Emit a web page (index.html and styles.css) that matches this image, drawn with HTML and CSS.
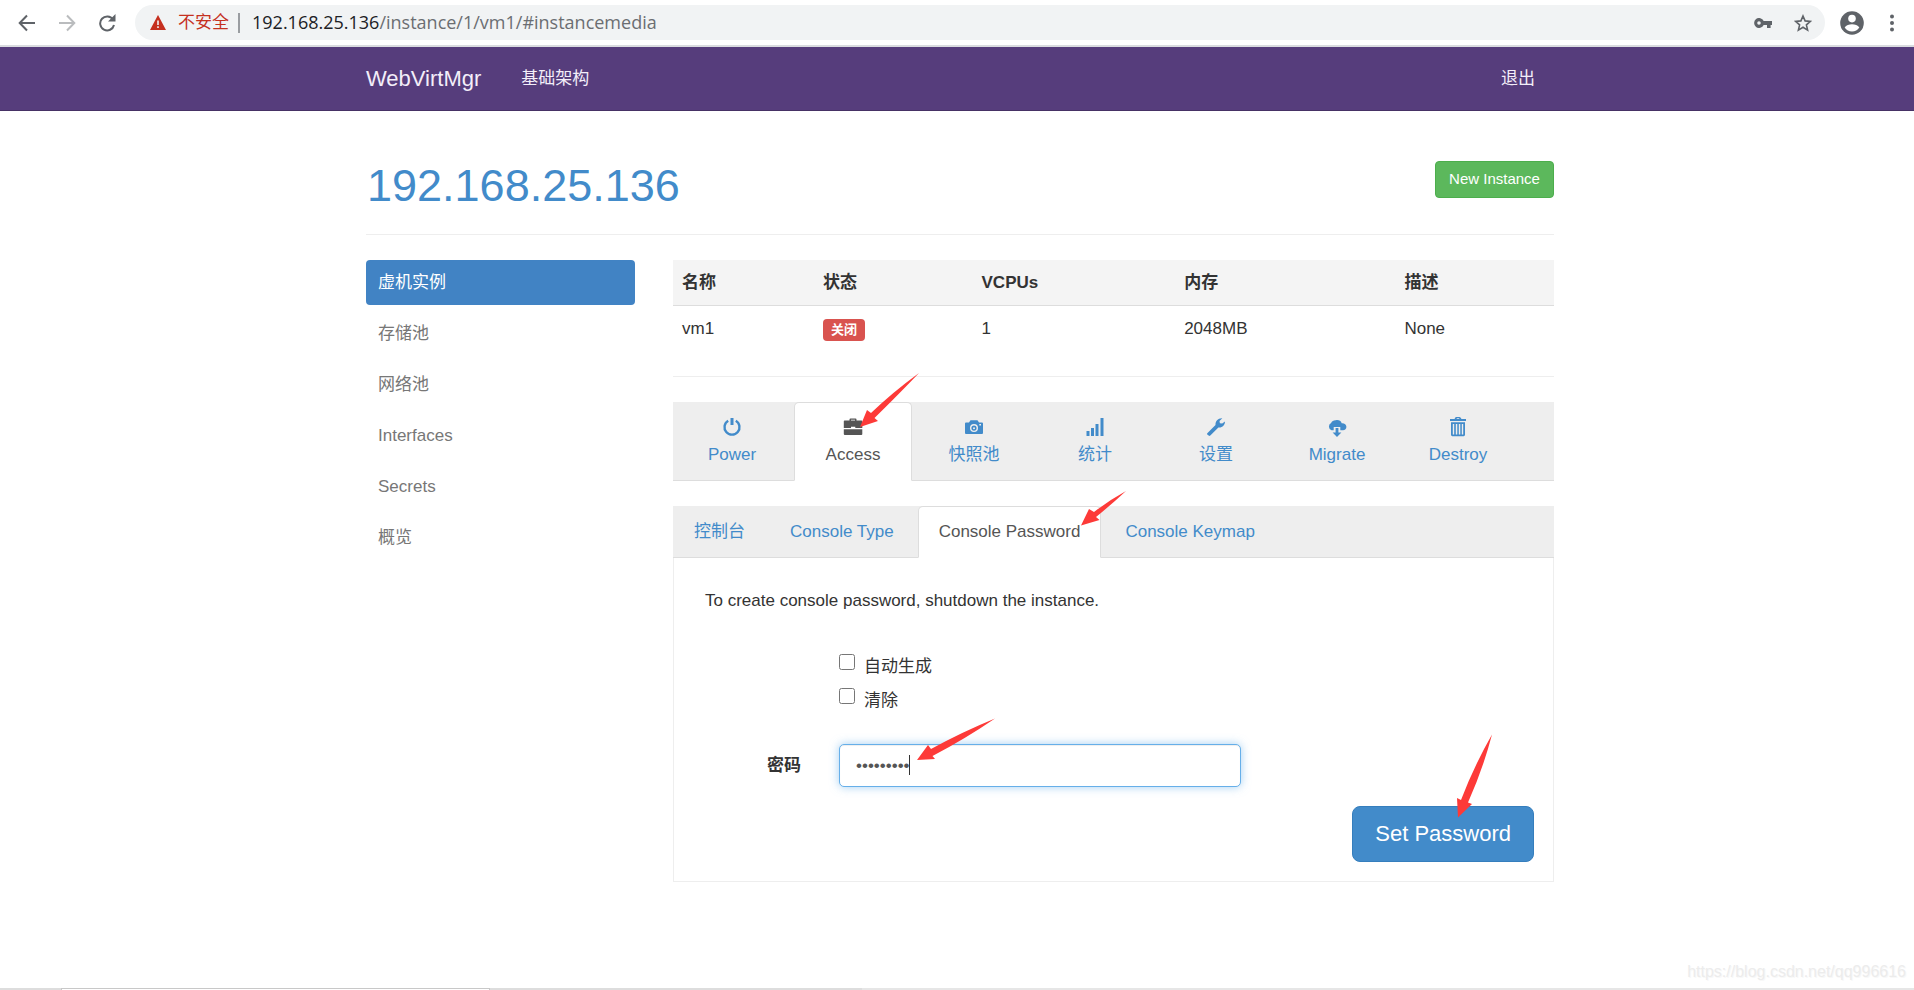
FILE: index.html
```html
<!DOCTYPE html>
<html lang="zh-CN">
<head>
<meta charset="utf-8">
<title>WebVirtMgr - vm1</title>
<link rel="stylesheet" href="styles.css">
</head>
<body>
<div class="toolbar">
  <button class="tool" type="button" aria-label="Back"><svg width="18" height="18" viewBox="0 0 18 18" fill="none" stroke="#5f6368" stroke-width="2"><path d="M17 9H2M9 1.5 1.7 9 9 16.5"/></svg></button>
  <button class="tool" type="button" aria-label="Forward"><svg width="18" height="18" viewBox="0 0 18 18" fill="none" stroke="#babcbe" stroke-width="2"><path d="M1 9h15M9 1.5 16.3 9 9 16.5"/></svg></button>
  <button class="tool" type="button" aria-label="Reload"><svg width="18" height="18" viewBox="0 0 18 18"><path d="M15 5.5A7 7 0 1 0 16 11" fill="none" stroke="#5f6368" stroke-width="2"/><path d="M17.5 0v7.5H10z" fill="#5f6368"/></svg></button>
  <div class="omnibox">
    <svg width="16" height="15" viewBox="0 0 16 15"><path d="M8 0 16 15H0z" fill="#c5301f"/><path d="M8 5.5v4.5M8 11.2v1.8" stroke="#f1f3f4" stroke-width="1.6"/></svg>
    <span class="unsafe">不安全</span>
    <span class="url"><span class="host">192.168.25.136</span>/instance/1/vm1/#instancemedia</span>
    <button class="tool" type="button" aria-label="Passwords"><svg width="18" height="10" viewBox="0 0 18 10"><path fill="#5f6368" fill-rule="evenodd" d="M9.7 3A5 5 0 1 0 9.7 7H13v3h3.600V7H18V3zM5 3.200a1.800 1.800 0 1 1 0 3.600a1.800 1.800 0 0 1 0-3.600z"/></svg></button>
    <button class="tool tool-star" type="button" aria-label="Bookmark"><svg width="18" height="18" viewBox="0 0 18 18" fill="none" stroke="#5f6368" stroke-width="1.600"><path d="M9 2l2.100 4.900 5.300.5-4 3.500 1.200 5.200L9 13.300l-4.600 2.800 1.200-5.200-4-3.500 5.300-.5z"/></svg></button>
  </div>
  <button class="tool tool-user" type="button" aria-label="Profile"><svg width="24" height="24" viewBox="0 0 24 24"><circle cx="12" cy="12" r="11.800" fill="#5f6368"/><circle cx="12" cy="7.600" r="3.800" fill="#fff"/><path d="M4.700 16.500c1.300-2.200 4.600-3.200 7.300-3.200s6 1 7.300 3.200A8.800 8.800 0 0 1 12 20.500a8.800 8.800 0 0 1-7.300-4z" fill="#fff"/></svg></button>
  <button class="tool" type="button" aria-label="Menu"><svg width="4" height="18" viewBox="0 0 4 18" fill="#5f6368"><circle cx="2" cy="2.500" r="2"/><circle cx="2" cy="9" r="2"/><circle cx="2" cy="15.500" r="2"/></svg></button>
</div>

<header class="navbar">
  <nav class="container navbar-inner">
    <a class="brand" href="#">WebVirtMgr</a>
    <a href="#">基础架构</a>
    <a class="logout" href="#">退出</a>
  </nav>
</header>

<main class="container content">
  <div class="page-header">
    <h1><a href="#">192.168.25.136</a></h1>
    <button class="btn btn-new" type="button">New Instance</button>
  </div>
  <div class="columns">
    <nav class="side">
      <a class="active" href="#">虚机实例</a>
      <a href="#">存储池</a>
      <a href="#">网络池</a>
      <a href="#">Interfaces</a>
      <a href="#">Secrets</a>
      <a href="#">概览</a>
    </nav>
    <section class="main">
      <table class="info">
        <thead><tr><th class="c1">名称</th><th class="c2">状态</th><th class="c3">VCPUs</th><th class="c4">内存</th><th>描述</th></tr></thead>
        <tbody><tr><td>vm1</td><td><span class="label">关闭</span></td><td>1</td><td>2048MB</td><td>None</td></tr></tbody>
      </table>
      <hr>
      <nav class="tabs tabs-main">
        <a href="#"><svg width="20" height="20" viewBox="0 0 20 20" fill="none" stroke="currentColor"><path d="M6.200 3.700a7.500 7.500 0 1 0 7.600 0" stroke-width="2.400"/><path d="M10 1v7" stroke-width="3"/></svg>Power</a>
        <a class="active" href="#"><svg width="20" height="20" viewBox="0 0 20 20" fill="currentColor"><path fill-rule="evenodd" d="M6.500 3.500V2.500Q6.500 1.500 7.500 1.500h5q1 0 1 1v1H18.500q.8 0 .8.800V11h-7V9.700H8V11H.8V4.300q0-.8.800-.8zM8 3.500h4V2.700H8z"/><path d="M.8 12.200h18.500V17q0 1-1 1H1.800q-1 0-1-1z"/></svg>Access</a>
        <a href="#"><svg width="20" height="20" viewBox="0 0 20 20" fill="currentColor"><path fill-rule="evenodd" d="M2 5.500h3l1.500-2.300h7L15 5.500h3q1 0 1 1V16q0 1-1 1H2q-1 0-1-1V6.500q0-1 1-1zM10 7a4 4 0 1 0 0 8a4 4 0 0 0 0-8zM15.300 7v1.600h1.700V7z"/><path fill-rule="evenodd" d="M10 8.500a2.600 2.600 0 1 0 0 5.200a2.600 2.600 0 0 0 0-5.200zm0 1.700a1 1 0 1 1 0 2a1 1 0 0 1 0-2z"/></svg>快照池</a>
        <a href="#"><svg width="20" height="20" viewBox="0 0 20 20" fill="currentColor"><path d="M1.500 14h3v5h-3zM6 11h3v8H6zM10.500 7h3v12h-3zM15.500 1h3v18h-3z"/></svg>统计</a>
        <a href="#"><svg width="20" height="20" viewBox="0 0 20 20" fill="currentColor"><path d="M1.300 16.200 9.500 8C9.200 4.500 12 1 16.300 1.300L13.500 4l.4 2.200 2.300.4 2.700-2.200c.4 3.600-3 6.600-6.500 6L4.300 18.600q-.9.800-1.700 0l-1.300-1q-.6-.7 0-1.400z"/></svg>设置</a>
        <a href="#"><svg width="20" height="20" viewBox="0 0 20 20" fill="currentColor"><path d="M4.500 13.200a4 4 0 0 1-.4-7.300C5 4 7 2.900 9 3.200c2.700-.5 5 .8 5.700 3C17.500 6 19.400 7.700 19.400 9.700c0 2-1.400 3.500-3.400 3.500h-2.700V10H6.700v3.200z"/><path d="M8.600 11h2.800v4.500h3L10 20l-4.400-4.500h3z"/></svg>Migrate</a>
        <a href="#"><svg width="20" height="20" viewBox="0 0 20 20" fill="currentColor"><path fill-rule="evenodd" d="M6.500 2 7.500.3Q8 0 8.500 0h3q.6 0 1 .4L13.500 2H18v2H2V2zm2 0h3l-.5-.8H9zM3 5.200h14V17.800q0 1.400-1.400 1.400H4.400Q3 19.200 3 17.800zM4.800 7v10.500h1.400V7zm3 0v10.500h1.500V7zm3 0v10.500h1.500V7zm3 0v10.500h1.400V7z"/></svg>Destroy</a>
      </nav>
      <nav class="tabs tabs-sub">
        <a href="#">控制台</a>
        <a href="#">Console Type</a>
        <a class="active" href="#">Console Password</a>
        <a href="#">Console Keymap</a>
      </nav>
      <form class="panel">
        <p>To create console password, shutdown the instance.</p>
        <div class="checks">
          <label><input type="checkbox">自动生成</label>
          <label><input type="checkbox">清除</label>
        </div>
        <div class="field">
          <label for="password">密码</label>
          <div class="control">
            <input id="password" type="password" value="password1">
            <span class="caret"></span>
          </div>
        </div>
        <button class="btn btn-set" type="button">Set Password</button>
      </form>
    </section>
  </div>
  <svg class="arrows" width="1188" height="800" viewBox="366 111 1188 800" fill="#fd3a38" aria-hidden="true">
    <path d="M919 373Q893 392 871 413L867 410 860 427 878 421 874.500 418Q900 393 919 373z"/>
    <path d="M1126 491Q1108 501 1094 512L1089 509 1081 525.500 1099.500 520 1096 517Q1112 504 1126 491z"/>
    <path d="M995 718.500Q962 732 931 749L928 745 917 760 935 759 932.500 756Q965 739 995 718.500z"/>
    <path d="M1492 734.500Q1474 766 1461 800L1457 798 1458 817.500 1472 804 1468 802.500Q1483 769 1492 734.500z"/>
  </svg>
</main>

<div class="watermark">https://blog.csdn.net/qq996616</div>
<div class="bottom-edge"><i class="edge-a"></i><i class="edge-b"></i><i class="edge-c"></i><i class="edge-d"></i></div>
</body>
</html>
```
FILE: styles.css
```css
* { box-sizing: border-box; }

body {
  margin: 0;
  min-height: 100vh;
  display: flex;
  flex-direction: column;
  position: relative;
  background: #fff;
  color: #333;
  font: 17px/25px "Liberation Sans", "Noto Sans CJK SC", sans-serif;
}

a { color: #428bca; text-decoration: none; }
button { font-family: inherit; cursor: pointer; }
svg { display: block; flex: none; }

.toolbar {
  display: flex;
  align-items: center;
  height: 47px;
  padding: 0 16px 0 18px;
  border-bottom: 2px solid #dadce0;
}
.tool {
  display: flex;
  padding: 0;
  margin-right: 22px;
  border: 0;
  background: none;
}
.toolbar > .tool:last-child { margin: 0 4px 0 0; }
.toolbar > .tool-user { margin: 0 26px 0 15px; }
.omnibox {
  flex: 1;
  display: flex;
  align-items: center;
  height: 35px;
  margin-left: -3px;
  padding: 0 13px 0 15px;
  border-radius: 18px;
  background: #f1f3f4;
}
.omnibox .tool-star { margin-right: 0; }
.unsafe {
  margin-left: 12px;
  padding-right: 9px;
  border-right: 2px solid #9a9da1;
  line-height: 20px;
  color: #c5301f;
}
.url {
  flex: 1;
  margin-left: 12px;
  font-family: "Open Sans", sans-serif;
  font-size: 18px;
  color: #6b6e72;
}
.host { color: #202124; }

.container {
  width: 1188px;
  max-width: 100%;
  margin: 0 auto;
  position: relative;
  left: 3px;
}

.navbar {
  height: 64px;
  background: #563d7c;
  border-bottom: 1px solid #463265;
}
.navbar-inner { display: flex; align-items: center; height: 63px; }
.navbar a { color: #f3eef9; }
.navbar .brand { margin-right: 40px; font-size: 22px; }
.navbar .logout { margin: 0 19px 0 auto; }

.page-header {
  display: flex;
  justify-content: space-between;
  align-items: flex-start;
  padding: 50px 0 24px;
  border-bottom: 1px solid #eee;
}
h1 { margin: 0; padding-left: 1px; font-size: 45px; font-weight: 400; line-height: 49px; }

.btn { border: 1px solid; color: #fff; }
.btn-new {
  width: 119px;
  height: 37px;
  padding: 0 0 2px;
  border-color: #4cae4c;
  border-radius: 4px;
  background: #5cb85c;
  font-size: 15px;
}
.btn-set {
  display: block;
  margin: 19px 0 0 auto;
  padding: 12px 22px;
  border-color: #357ebd;
  border-radius: 8px;
  background: #428bca;
  font-size: 22px;
  line-height: 30px;
}

.columns { display: flex; gap: 38px; padding-top: 25px; }
.side { width: 269px; display: flex; flex-direction: column; gap: 6px; }
.side a { padding: 10px 12px; border-radius: 4px; color: #777; }
.side .active { background: #4183c4; color: #fff; }

.main { flex: 1; min-width: 0; }
.info { width: 100%; border-collapse: collapse; table-layout: fixed; }
.info th, .info td { padding: 10px 9px; text-align: left; vertical-align: top; }
.info th { background: #f4f4f4; border-bottom: 1px solid #ddd; }
.info td { height: 45px; }
.c1 { width: 16%; }
.c2 { width: 18%; }
.c3 { width: 23%; }
.c4 { width: 25%; }
.label {
  display: inline-block;
  margin-top: 3px;
  padding: 0 8px;
  border-radius: 4px;
  background: #d9534f;
  color: #fff;
  font-size: 13px;
  font-weight: 700;
  line-height: 22px;
}
hr { margin: 25px 0; border: 0; border-top: 1px solid #eee; }

.tabs { display: flex; background: #eee; border-bottom: 1px solid #ddd; }
.tabs a {
  margin-bottom: -1px;
  border: 1px solid transparent;
  border-radius: 5px 5px 0 0;
}
.tabs .active {
  border-color: #ddd #ddd #fff;
  background: #fff;
  color: #555;
}
.tabs-main { gap: 3px; height: 79px; }
.tabs-main a {
  width: 118px;
  padding-top: 14px;
  display: flex;
  flex-direction: column;
  align-items: center;
  gap: 5px;
}
.tabs-sub { gap: 3px; height: 52px; margin-top: 25px; }
.tabs-sub a { padding: 12px 20px; }

.panel {
  padding: 30px 19px 19px 31px;
  border: 1px solid #eee;
  border-top: 0;
}
.panel p { margin: 0; }
.checks {
  display: flex;
  flex-direction: column;
  gap: 9px;
  padding: 41px 0 0 134px;
}
.checks label { display: flex; align-items: flex-start; gap: 9px; }
.checks input { width: 16px; height: 16px; margin: 0; }
.field { display: flex; align-items: center; margin-top: 31px; }
.field label { width: 96px; text-align: right; font-weight: 700; }
.control { position: relative; width: 402px; margin-left: 38px; }
.control input {
  display: block;
  width: 100%;
  height: 43px;
  padding: 7px 16px;
  border: 1px solid #66afe9;
  border-radius: 5px;
  outline: 0;
  box-shadow: inset 0 1px 1px #eee, 0 0 10px rgba(102, 175, 233, .6);
  color: #555;
  font: 17px/25px "Liberation Sans", sans-serif;
}
.caret {
  position: absolute;
  left: 70px;
  top: 11px;
  width: 1px;
  height: 20px;
  background: #333;
}

.arrows { position: absolute; left: 0; top: 0; pointer-events: none; }

.watermark {
  position: absolute;
  right: 8px;
  bottom: 6px;
  color: #ececec;
  font-size: 16px;
  text-shadow: 1px 1px 0 #f8f8f8;
}
.bottom-edge { display: flex; height: 2px; margin-top: auto; }
.edge-a { width: 61px; background: #ddd; }
.edge-b { width: 429px; border: 1px solid #c8c8c8; border-bottom: 0; }
.edge-c { width: 372px; background: #ddd; }
.edge-d { flex: 1; background: #e6e6e6; }
```
